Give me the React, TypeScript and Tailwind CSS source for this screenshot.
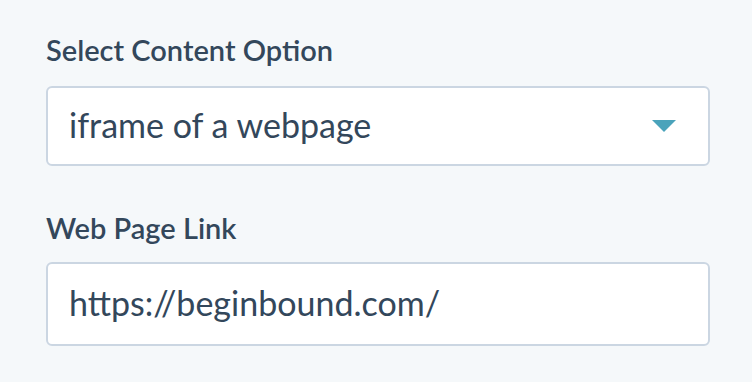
export default function App() {
  return (
    <div
      className="w-[752px] h-[382px] bg-[#f5f8fa] pl-[46px] pt-[33px] text-[#33475b]"
      style={{ fontFamily: 'Lato, "Open Sans", sans-serif' }}
    >
      {/* content option */}
      <label className="block text-[29px] leading-[34px] font-semibold mb-[19px]">
        Select Content Option
      </label>
      <div className="w-[664px] h-[80px] bg-white border-2 border-[#cbd6e2] rounded-[6px] flex items-center justify-between pl-[21px] pr-[32px]">
        <span className="text-[34px] leading-[40px] pb-[2px]">iframe of a webpage</span>
        <svg width="24" height="12" viewBox="0 0 24 12">
          <path d="M0 0 H24 L12 12 Z" fill="#4aa3bb" />
        </svg>
      </div>

      {/* link */}
      <label className="block text-[29px] leading-[34px] font-semibold mt-[45px] mb-[17px]">
        Web Page Link
      </label>
      <div className="w-[664px] h-[84px] bg-white border-2 border-[#cbd6e2] rounded-[6px] flex items-center pl-[21px]">
        <span className="text-[34px] leading-[40px] pb-[2px]">https://beginbound.com/</span>
      </div>
    </div>
  );
}
